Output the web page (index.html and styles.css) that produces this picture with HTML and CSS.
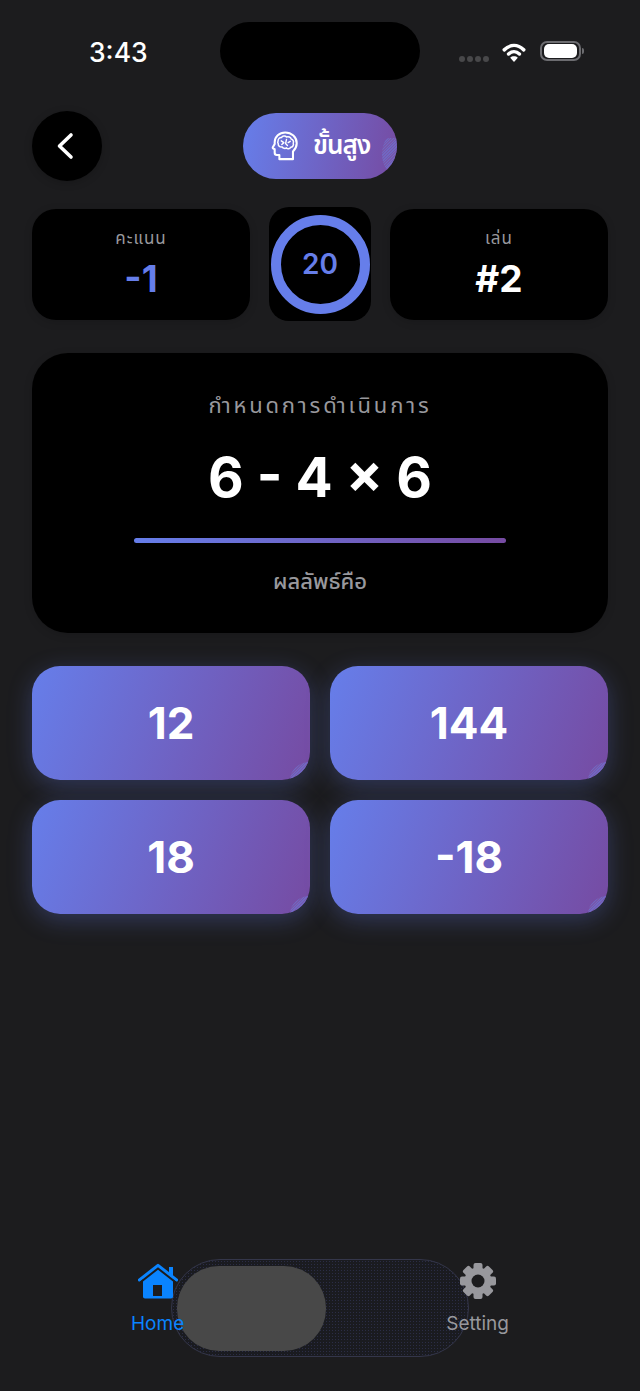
FILE: index.html

```html
<!DOCTYPE html>
<html lang="th">
<head>
    <meta charset="UTF-8">
    <meta name="viewport" content="width=device-width, initial-scale=1.0">
    <title>ขั้นสูง</title>
    <link rel="stylesheet" href="styles.css">
</head>
<body>
    <div class="screen">
        <!-- Status bar -->
        <div class="status-bar">
            <div class="time">3:43</div>
            <div class="island"></div>
            <div class="status-icons">
                <div class="signal"><span></span><span></span><span></span><span></span></div>
                <svg class="wifi" width="26" height="19" viewBox="0 0 26 21">
                    <path d="M2.2 7.6C9 1.2 17 1.2 23.8 7.6" fill="none" stroke="#fff" stroke-width="3.8" stroke-linecap="round"/>
                    <path d="M7 12.2C10.6 8.8 15.4 8.8 19 12.2" fill="none" stroke="#fff" stroke-width="3.8" stroke-linecap="round"/>
                    <path d="M13 21L8.8 16.4C11 14.2 15 14.2 17.2 16.4Z" fill="#fff"/>
                </svg>
                <div class="battery"><div class="battery-fill"></div></div>
                <div class="battery-cap"></div>
            </div>
        </div>

        <!-- Header -->
        <div class="header">
            <button class="back-btn">
                <svg width="20" height="28" viewBox="0 0 20 28">
                    <path d="M16 3L4.5 14L16 25" fill="none" stroke="#fff" stroke-width="3.6" stroke-linecap="round" stroke-linejoin="round"/>
                </svg>
            </button>
            <div class="level-pill">
                <svg class="brain" width="28" height="30" viewBox="0 0 28 32">
                    <path d="M8 30V25.5H5.2C3.8 25.5 3 24.6 3 23.2V19.5L1.2 18.6C.8 18.3.8 17.8 1 17.4L3 13.8V12C3 6 8 1.5 14.2 1.5C21 1.5 26.5 6.4 26.5 13C26.5 16.8 24.8 19.5 22.5 21.8V30Z" fill="none" stroke="#fff" stroke-width="2.2" stroke-linejoin="round"/>
                    <path d="M6.6 10.5C6.6 8 8.6 6.8 10.2 7C11.4 5 14.4 4.8 15.6 6.4C17.6 5.6 20.2 6.6 20.6 8.6C22.6 9.2 23.6 11.2 22.8 13C23.6 15.2 22 17.4 20 17.4C19 19.2 16.6 19.4 15.6 18C14.2 19 11.8 18.6 11 17C8.8 17.4 6.4 16 6.8 13.6C6.2 12.8 6.2 11.4 6.6 10.5Z" fill="none" stroke="#fff" stroke-width="1.6" stroke-linejoin="round"/>
                    <path d="M10 10.5L12.8 12.4L10.6 14.4M15.6 9L14.6 13.4L16.6 15.4M19.6 11L17.4 12.4" fill="none" stroke="#fff" stroke-width="1.5" stroke-linecap="round" stroke-linejoin="round"/>
                </svg>
                <span class="level-text">ขั้นสูง</span>
            </div>
        </div>

        <!-- Score row -->
        <div class="stats">
            <div class="stat-card">
                <div class="stat-label">คะแนน</div>
                <div class="stat-value score">-1</div>
            </div>
            <div class="timer-card">
                <div class="timer-ring">20</div>
            </div>
            <div class="stat-card">
                <div class="stat-label">เล่น</div>
                <div class="stat-value">#2</div>
            </div>
        </div>

        <!-- Question -->
        <div class="question-card">
            <div class="question-title">กำหนดการดำเนินการ</div>
            <div class="question-expr">6 - 4 × 6</div>
            <div class="question-line"></div>
            <div class="question-hint">ผลลัพธ์คือ</div>
        </div>

        <!-- Answers -->
        <div class="answers">
            <button class="answer-btn">12</button>
            <button class="answer-btn">144</button>
            <button class="answer-btn">18</button>
            <button class="answer-btn">-18</button>
        </div>

        <!-- Tab bar -->
        <div class="tab-bar">
            <div class="tab-glass"><div class="tab-thumb"></div></div>
            <div class="tab-item active">
                <svg width="40" height="36" viewBox="0 0 40 36">
                    <rect x="31" y="4" width="4" height="10" fill="#0a84ff"/>
                    <path d="M5 15.5L20 3.5L35 15.5V33.5C35 34.6 34.2 35.5 33 35.5H7C5.8 35.5 5 34.6 5 33.5Z" fill="#0a84ff"/>
                    <path d="M1.5 17L20 2.5L38.5 17" fill="none" stroke="#0a84ff" stroke-width="3.2" stroke-linecap="round" stroke-linejoin="round"/>
                    <path d="M1.5 20L20 5.5L38.5 20" fill="none" stroke="#1c1c1e" stroke-width="2"/>
                    <rect x="15" y="22" width="9" height="11" fill="#1c1c1e"/>
                </svg>
                <span>Home</span>
            </div>
            <div class="tab-item">
                <svg width="36" height="36" viewBox="0 0 36 36">
                    <g fill="#98989d">
                        <rect x="13.5" y="0" width="9" height="36" rx="2"/>
                        <rect x="13.5" y="0" width="9" height="36" rx="2" transform="rotate(45 18 18)"/>
                        <rect x="13.5" y="0" width="9" height="36" rx="2" transform="rotate(90 18 18)"/>
                        <rect x="13.5" y="0" width="9" height="36" rx="2" transform="rotate(135 18 18)"/>
                        <circle cx="18" cy="18" r="13.5"/>
                    </g>
                    <circle cx="18" cy="18" r="6.5" fill="#1c1c1e"/>
                </svg>
                <span>Setting</span>
            </div>
        </div>
    </div>
</body>
</html>
```

FILE: styles.css

```css
* {
    box-sizing: border-box;
}
body {
    margin: 0;
    background-color: #1c1c1e;
    font-family: Inter, "Noto Sans", "Noto Sans Thai", "DejaVu Sans", sans-serif;
    color: #fff;
}
.screen {
    display: flex;
    flex-direction: column;
    height: 1391px;
    padding: 22px 32px 0;
    overflow: hidden;
}
.status-bar {
    display: grid;
    grid-template-columns: 1fr 200px 1fr;
    height: 58px;
    margin: 0 -32px;
}
.time {
    padding: 16px 0 0 89px;
    font-size: 26.5px;
    line-height: 28px;
    font-weight: 500;
}
.island {
    background-color: #000;
    border-radius: 29px;
}
.status-icons {
    display: flex;
    align-items: flex-start;
    padding: 19px 0 0 39px;
}
.signal {
    display: flex;
    gap: 2px;
    margin: 15px 12px 0 0;
}
.signal span {
    width: 6px;
    height: 6px;
    border-radius: 50%;
    background-color: #48484a;
}
.wifi {
    margin: 2px 13px 0 0;
}
.battery {
    width: 41px;
    height: 20px;
    padding: 1px 2px;
    border: 2px solid #6c6c70;
    border-radius: 7px;
}
.battery-fill {
    height: 100%;
    background-color: #fff;
    border-radius: 5px;
}
.battery-cap {
    width: 2px;
    height: 6px;
    margin: 7px 0 0 1px;
    background-color: #6c6c70;
    border-radius: 0 2px 2px 0;
}
.header {
    display: flex;
    align-items: center;
    height: 70px;
    margin-top: 31px;
}
.back-btn {
    display: flex;
    align-items: center;
    justify-content: center;
    width: 70px;
    height: 70px;
    padding: 0 4px 0 0;
    background-color: #000;
    border: none;
    border-radius: 50%;
    box-shadow: 0 2px 8px rgba(0,0,0,0.2);
}
.level-pill {
    display: flex;
    align-items: center;
    gap: 14px;
    position: relative;
    width: 154px;
    height: 66px;
    margin: 0 0 0 141px;
    padding-left: 28px;
    background: linear-gradient(100deg, #667eea, #764ba2);
    border-radius: 33px;
    overflow: hidden;
}
.level-pill::after {
    content: "";
    position: absolute;
    right: 0;
    top: 25px;
    width: 15px;
    height: 32px;
    background: repeating-linear-gradient(135deg, #6f68c4 0 1px, #7858ac 1px 2px);
    border-radius: 100% 0 0 100%;
}
.level-text {
    font-size: 26px;
    font-weight: 600;
    letter-spacing: -1px;
}
.stats {
    display: grid;
    grid-template-columns: 218px 102px 218px;
    justify-content: space-between;
    align-items: center;
    margin-top: 26px;
}
.stat-card {
    display: flex;
    flex-direction: column;
    align-items: center;
    height: 111px;
    padding-top: 17px;
    background-color: #000;
    border-radius: 24px;
    box-shadow: 0 2px 8px rgba(0,0,0,0.15);
}
.stat-label {
    font-size: 17px;
    line-height: 24px;
    letter-spacing: 1px;
    color: #98989d;
}
.stat-value {
    margin-top: 7px;
    font-size: 37px;
    line-height: 44px;
    font-weight: 700;
}
.score {
    color: #667eea;
}
.timer-card {
    display: flex;
    align-items: center;
    justify-content: center;
    height: 114px;
    background-color: #000;
    border-radius: 20px;
}
.timer-ring {
    display: flex;
    align-items: center;
    justify-content: center;
    width: 99px;
    height: 99px;
    border: 10px solid #667eea;
    border-radius: 50%;
    font-size: 28px;
    font-weight: 600;
    color: #667eea;
}
.question-card {
    display: flex;
    flex-direction: column;
    align-items: center;
    height: 280px;
    margin-top: 32px;
    padding-top: 36px;
    background-color: #000;
    border-radius: 36px;
    box-shadow: 0 2px 8px rgba(0,0,0,0.15);
}
.question-title {
    font-size: 22px;
    line-height: 32px;
    letter-spacing: 2.8px;
    color: #98989d;
}
.question-expr {
    margin-top: 22px;
    font-size: 55px;
    line-height: 68px;
    font-weight: 700;
}
.question-line {
    width: 372px;
    height: 5px;
    margin-top: 27px;
    background: linear-gradient(90deg, #667eea, #764ba2);
    border-radius: 3px;
}
.question-hint {
    margin-top: 23px;
    font-size: 22px;
    line-height: 30px;
    font-weight: 500;
    color: #98989d;
}
.answers {
    display: grid;
    grid-template-columns: 1fr 1fr;
    gap: 20px;
    margin-top: 33px;
}
.answer-btn {
    position: relative;
    height: 114px;
    background: linear-gradient(110deg, #667eea, #764ba2);
    border: none;
    border-radius: 28px;
    box-shadow: 0 6px 24px rgba(102,126,234,0.3);
    font-family: inherit;
    font-size: 44px;
    font-weight: 700;
    color: #fff;
    overflow: hidden;
}
.answer-btn::after {
    content: "";
    position: absolute;
    right: 0;
    bottom: 0;
    width: 20px;
    height: 18px;
    background: repeating-linear-gradient(135deg, #6f68c4 0 1px, #7858ac 1px 2px);
    border-radius: 100% 0 0 0;
}
.tab-bar {
    display: flex;
    justify-content: space-between;
    position: relative;
    width: 378px;
    height: 132px;
    margin-top: auto;
    align-self: center;
}
.tab-glass {
    position: absolute;
    top: 0;
    left: 40px;
    width: 298px;
    height: 98px;
    padding: 6px 5px;
    background-color: #1a1b20;
    background-image: radial-gradient(circle, #2b2d46 0.8px, transparent 0.9px);
    background-size: 3px 3px;
    border: 1px solid #34364a;
    border-radius: 49px;
}
.tab-thumb {
    width: 149px;
    height: 85px;
    background-color: #484848;
    border-radius: 42px;
}
.tab-item {
    display: flex;
    flex-direction: column;
    align-items: center;
    position: relative;
    padding-top: 4px;
    font-size: 19px;
    line-height: 24px;
    color: #98989d;
}
.tab-item span {
    margin-top: 13px;
}
.tab-item.active {
    color: #0a84ff;
}
```
